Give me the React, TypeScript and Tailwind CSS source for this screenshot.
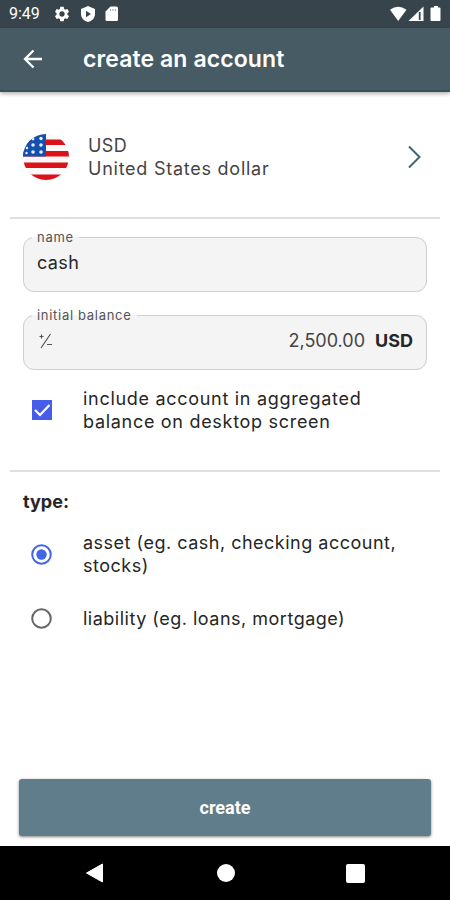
import React from 'react';
import { MdSettings } from 'react-icons/md';

type FieldProps = {
  label: string;
  labelClass: string;
  className?: string;
  children: React.ReactNode;
};

const Field: React.FC<FieldProps> = ({ label, labelClass, className = '', children }) => {
  return (
    <fieldset
      className={`mx-[23px] h-[63px] rounded-[11px] border-[1.5px] border-[#cfcfcf] bg-[#f4f4f4] ${className}`}
    >
      <legend className={`ml-2 h-4 px-[5px] text-[13px] leading-4 whitespace-nowrap text-[#555] ${labelClass}`}>
        {label}
      </legend>
      {children}
    </fieldset>
  );
};

const StatusBar: React.FC = () => {
  return (
    <div className="flex h-7 items-center bg-[#37444c] pr-2 pl-[9px] text-white">
      <span className="w-[44px] font-[Roboto,sans-serif] text-[16px] leading-7">9:49</span>
      <MdSettings className="size-[18px]" />
      <svg className="ml-2 size-[18px]" viewBox="0 0 18 18">
        <path d="M9 1 L16 4 V9 C16 13 13 16 9 17 C5 16 2 13 2 9 V4 Z" fill="#fff" />
        <path d="M7 5.8 L12 9 L7 12.2 Z" fill="#37444c" />
      </svg>
      <svg className="ml-[7px] h-[18px] w-4" viewBox="0 0 16 18">
        <path d="M6.5 1.5 H12.5 Q14 1.5 14 3 V14.5 Q14 16 12.5 16 H3 Q1.5 16 1.5 14.5 V6.5 Z" fill="#fff" />
        <path d="M6.5 4 V6 M9 4 V6 M11.4 4 V6" stroke="#9ba3a8" strokeWidth="1" />
      </svg>
      <svg className="ml-auto h-[18px] w-[54px]" viewBox="0 0 54 18">
        <path d="M2 4.8 Q10 -1.2 18.5 4.8 L10.2 16 Z" fill="#fff" />
        <path d="M35.5 1.5 V16 H20.5 Z" fill="#fff" />
        <path d="M31.7 7 V15" stroke="#37444c" strokeWidth="1.8" />
        <path d="M44.5 2.5 H46 V1 H50 V2.5 H51.5 Q52.5 2.5 52.5 3.5 V15 Q52.5 16 51.5 16 H43.5 Q42.5 16 42.5 15 V3.5 Q42.5 2.5 43.5 2.5 Z" fill="#fff" />
      </svg>
    </div>
  );
};

const AppBar: React.FC = () => {
  return (
    <header className="relative flex h-16 items-center border-b-2 border-[#35525b] bg-[#465b63] pl-[23px] text-white shadow-[0_2px_4px_rgba(0,0,0,0.3)]">
      <svg className="size-5" viewBox="0 0 20 20" fill="none" stroke="#fff" strokeWidth="2.3">
        <path d="M10.5 1.5 L2 10 L10.5 18.5 M2 10 H19" />
      </svg>
      <h1 className="ml-10 text-[23px] leading-7 font-semibold tracking-[0.1px] whitespace-nowrap">
        create an account
      </h1>
    </header>
  );
};

const Flag: React.FC = () => {
  return (
    <svg className="size-[46px]" viewBox="0 0 46 46">
      <defs>
        <clipPath id="flag">
          <circle cx="23" cy="23" r="23" />
        </clipPath>
      </defs>
      <g clipPath="url(#flag)">
        <rect width="46" height="46" fill="#faf8f9" />
        <path d="M0 5.5h46v5.5H0z M0 17h46v5.5H0z M0 28.5h46V34H0z M0 40.5h46V46H0z" fill="#dc1119" />
        <rect width="23" height="22.5" fill="#1451ae" />
        <g fill="#e6f0ff">
          <circle cx="10" cy="5" r="1.4" />
          <circle cx="18" cy="4.5" r="1.7" />
          <circle cx="10" cy="11" r="1.8" />
          <circle cx="18" cy="11" r="1.8" />
          <circle cx="4" cy="14" r="1.2" />
          <circle cx="10" cy="18" r="1.8" />
          <circle cx="18" cy="18" r="1.8" />
          <circle cx="3.5" cy="19" r="1.2" />
        </g>
      </g>
    </svg>
  );
};

const NavigationBar: React.FC = () => {
  return (
    <nav className="mt-[10px] flex h-[54px] items-center justify-between bg-black pr-[85px] pl-[85px]">
      <svg className="size-5" viewBox="0 0 20 20">
        <path d="M17.5 1 V19 L1.5 10 Z" fill="#fff" stroke="#fff" strokeLinejoin="round" />
      </svg>
      <span className="size-[18px] rounded-full bg-white" />
      <span className="size-[19px] rounded-[2px] bg-white" />
    </nav>
  );
};

const App: React.FC = () => {
  return (
    <div className="flex h-[900px] w-[450px] flex-col overflow-hidden bg-white font-[Inter,sans-serif] text-[18px] leading-[23px] text-[#262626]">
      <StatusBar />
      <AppBar />

      <section className="flex h-[125px] items-center pt-[4px] pl-[23px] text-[#444]">
        <Flag />
        <div className="ml-[19px] whitespace-nowrap">
          <p className="tracking-[0.4px]">USD</p>
          <p className="tracking-[0.75px]">United States dollar</p>
        </div>
        <svg className="mr-[28px] ml-auto h-6 w-[15px]" viewBox="0 0 15 24" fill="none" stroke="#3e6673" strokeWidth="2">
          <path d="M2 1.5 L12.5 12 L2 22.5" />
        </svg>
      </section>
      <hr className="mx-[10px] border-t-2 border-[#dfdfdf]" />

      <Field label="name" labelClass="tracking-[0.7px]" className="mt-[10px]">
        <div className="flex h-[35px] items-center pl-[13px] tracking-[0.4px]">cash</div>
      </Field>
      <Field label="initial balance" labelClass="tracking-[0.7px]" className="mt-[15px]">
        <div className="flex h-[35px] items-center pr-[13px] pl-[13px]">
          <svg className="size-[18px]" viewBox="0 0 18 18" fill="none" stroke="#555" strokeWidth="1.2">
            <path d="M13.5 2 L4 16 M2.5 4.5 H6.5 M4.5 2.5 V6.5 M10 12.5 H15" />
          </svg>
          <span className="ml-auto text-[#444]">2,500.00</span>
          <span className="ml-[10px] font-bold">USD</span>
        </div>
      </Field>

      <label className="mt-[17px] flex h-[46px] items-center pl-[32px]">
        <svg className="size-5" viewBox="0 0 20 20">
          <rect width="20" height="20" fill="#465ceb" />
          <path d="M3 10 L8 15 L17.5 5" fill="none" stroke="#fff" strokeWidth="2.2" />
        </svg>
        <span className="ml-[31px] whitespace-nowrap tracking-[0.7px]">
          include account in aggregated
          <br />
          balance on desktop screen
        </span>
      </label>
      <hr className="mx-[10px] mt-[37px] border-t-2 border-[#dfdfdf]" />

      <h2 className="mt-[18px] ml-[23px] font-bold">type:</h2>
      <label className="mt-[18px] flex h-[46px] items-center pl-[31px]">
        <svg className="size-[21px]" viewBox="0 0 21 21">
          <circle cx="10.5" cy="10.5" r="9.3" fill="none" stroke="#4365e8" strokeWidth="2" />
          <circle cx="10.5" cy="10.5" r="5.2" fill="#4365e8" />
        </svg>
        <span className="ml-[31px] whitespace-nowrap tracking-[0.5px]">
          asset (eg. cash, checking account,
          <br />
          stocks)
        </span>
      </label>
      <label className="mt-[30px] flex h-[23px] items-center pl-[31px]">
        <svg className="size-[21px]" viewBox="0 0 21 21">
          <circle cx="10.5" cy="10.5" r="9.3" fill="none" stroke="#666" strokeWidth="2" />
        </svg>
        <span className="ml-[31px] whitespace-nowrap tracking-[0.5px]">liability (eg. loans, mortgage)</span>
      </label>

      <button className="mx-[19px] mt-auto h-[57px] shrink-0 rounded-[3px] bg-[#607d8b] font-[Roboto,sans-serif] text-[18px] font-bold text-white shadow-[0_1px_3px_rgba(0,0,0,0.5)]">
        create
      </button>
      <NavigationBar />
    </div>
  );
};

export default App;
